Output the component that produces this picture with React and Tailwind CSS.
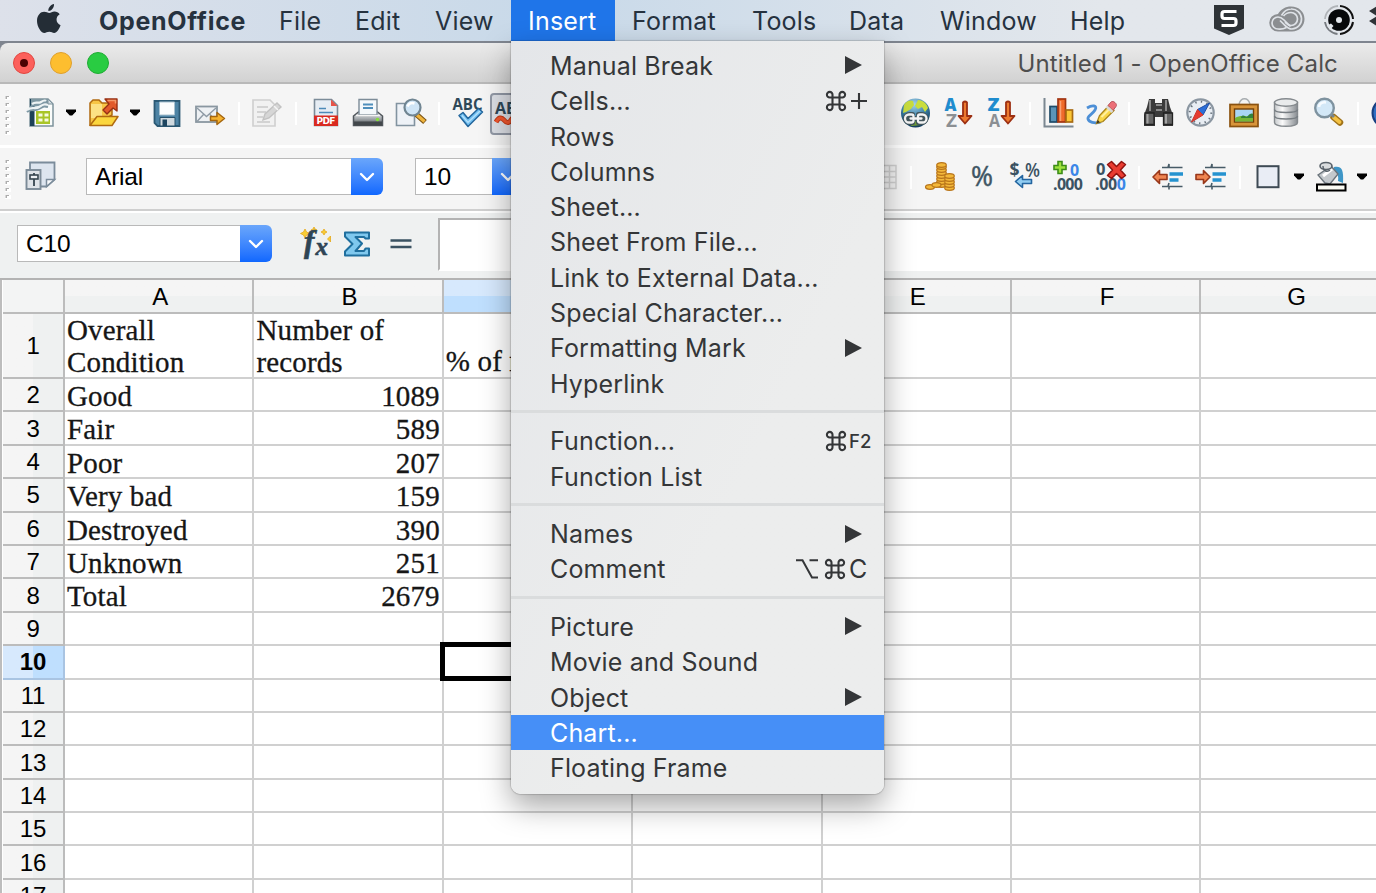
import React from "react";

const Svg = ({ children, className = "" }) => (
  <svg viewBox="0 0 32 32" className={`h-8 w-8 shrink-0 overflow-visible ${className}`}>{children}</svg>
);

const Sep = ({ className = "" }) => <div className={`mt-[5px] h-[23px] w-[2px] shrink-0 bg-white ${className}`} />;

const Caret = ({ className = "" }) => (
  <svg viewBox="0 0 12 32" className={`h-8 w-3 shrink-0 ${className}`}>
    <path d="M1 12.500h10v2L7.200 18.600H4.800L1 14.500z" fill="#000" />
  </svg>
);

const Grip = () => (
  <svg viewBox="0 0 6 44" className="-mt-[2px] ml-[5px] h-11 w-[6px] shrink-0">
    {[0, 7, 14, 21, 28, 35].map((y) => (
      <g key={y}>
        <path d={`M0 ${y + 1}h6v4h-6z`} fill="#fff" />
        <path d={`M0.500 ${y + 1}h3.500v1h-2v2h-1.500z`} fill="#adadad" />
      </g>
    ))}
  </svg>
);

const NewSheetIcon = () => (
  <Svg className="ml-[15px]">
    <path d="M4 2h18l5 5v22H4z" fill="#fafcfb" stroke="#7d929c" strokeWidth="1.500" />
    <path d="M4 2h4.500v27H4z" fill="#1d4257" />
    <path d="M5 2h17v7H5z" fill="#7f98a2" />
    <path d="M1 15c4-4 7 0 12-3s5-3 9-2M4 10c4-3 7 0 11-3s4-2 6-1" stroke="#7e98a4" strokeWidth="2" fill="none" />
    <path d="M1 13c4-4 8 0 12-3s6-3 10-2M6 7c4-3 6 0 9-2s4-2 5-1" stroke="#eef3f4" strokeWidth="2.200" fill="none" />
    <path d="M10 14h14v13H10z" fill="#a9c527" />
    <path d="M12.500 16.500h4v3h-4zM18.500 16.500h4v3h-4zM12.500 21.500h4v3h-4zM18.500 21.500h4v3h-4z" fill="#f6fae0" />
    <path d="M22 2v5h5z" fill="#d4dde2" stroke="#7d929c" />
  </Svg>
);

const OpenIcon = () => (
  <Svg className="ml-[10px]">
    <path d="M3 28V6l3-3h6l3 3h10v12L9 28z" fill="#f7c545" stroke="#b06a10" strokeWidth="1.500" />
    <path d="M4 7h11v14H4z" fill="#fce184" />
    <path d="M3 28.500l7-9h21l-6 9z" fill="#fbd63e" stroke="#b06a10" strokeWidth="1.500" strokeLinejoin="round" />
    <path d="M18 2h12v12l-4-3-6 6-4-4 6-6z" fill="#e25a2b" stroke="#962f13" strokeWidth="1.400" strokeLinejoin="round" />
    <path d="M20.500 3.500h8v3" stroke="#f59a6a" strokeWidth="1.500" fill="none" />
  </Svg>
);

const SaveIcon = () => (
  <Svg className="ml-[10px]">
    <path d="M3.500 4h25v25H6.500l-3-3z" fill="#4d83a4" stroke="#2b5974" strokeWidth="1.800" />
    <path d="M8.500 5h15v13h-15z" fill="#fbfdfe" stroke="#a8c2d1" />
    <path d="M9 20.500h15V29H9z" fill="#cfd9df" stroke="#26506b" />
    <path d="M11.500 22.500h4.500V29h-4.500z" fill="#1d455f" />
  </Svg>
);

const MailIcon = () => (
  <Svg className="ml-[11px]">
    <rect x="2" y="9.500" width="21" height="15.500" fill="#eef1f4" stroke="#8a97a1" strokeWidth="1.800" />
    <path d="M3 11l9.500 8.500L22 11M3 24.500l6.500-7M22 24.500l-6-7" stroke="#8e9aa5" strokeWidth="1.400" fill="none" />
    <path d="M16.500 19.500H23V15.500l7.500 6L23 27.500v-4h-6.500z" fill="#f5b22e" stroke="#a5660f" strokeWidth="1.500" strokeLinejoin="round" />
  </Svg>
);

const EditIcon = () => (
  <Svg className="ml-[10px]">
    <path d="M3 3h17l5 5v21H3z" fill="#f1f1f1" stroke="#cfcfcf" strokeWidth="1.600" />
    <path d="M7 10h11M7 15h9M7 20h6M7 25h13" stroke="#d3d3d3" strokeWidth="1.800" />
    <path d="M13 23l2-6L27 6l4 4-12 11z" fill="#d6d6d6" stroke="#c2c2c2" strokeWidth="1.400" />
    <path d="M24 9l4 4" stroke="#f5f5f5" strokeWidth="1.500" />
  </Svg>
);

const PdfIcon = () => (
  <Svg className="ml-[13px]">
    <path d="M4.500 2.500h17l6 6v20h-23z" fill="#e6edf4" stroke="#7c8c99" strokeWidth="1.600" />
    <path d="M21 2.500l6.500 6.500H21z" fill="#e65449" />
    <path d="M9 11.500h7M9 15.500h14" stroke="#4d8ab8" strokeWidth="1.600" />
    <path d="M4 18.500h24V29H4z" fill="#d92a20" />
    <text x="16" y="27.200" textAnchor="middle" textLength="19" fontSize="9" fontWeight="700" fill="#fff" className="font-['DejaVu_Sans',sans-serif]">PDF</text>
  </Svg>
);

const PrintIcon = () => (
  <Svg className="ml-[10px]">
    <defs>
      <linearGradient id="printer" x1="0" y1="0" x2="0" y2="1"><stop offset="0" stopColor="#eceef0" /><stop offset=".5" stopColor="#a3a8ac" /><stop offset="1" stopColor="#42474b" /></linearGradient>
    </defs>
    <path d="M1.500 19l5-4h19l5 4v9.500h-29z" fill="url(#printer)" stroke="#50565b" strokeWidth="1.500" />
    <path d="M7 18V2.500h18V18z" fill="#f4f8fb" stroke="#7d8c98" strokeWidth="1.400" />
    <path d="M11 7.500h10M11 11h10" stroke="#4e8ebb" strokeWidth="1.800" />
    <path d="M4 18.500h24" stroke="#f4f4f4" strokeWidth="1.400" />
    <path d="M2 24.500h28v4H2z" fill="#42474b" />
    <circle cx="25.500" cy="22.500" r="1.800" fill="#85dd3f" />
  </Svg>
);

const PreviewIcon = () => (
  <Svg className="ml-[10px]">
    <path d="M2.500 6.500h18v22h-18z" fill="#eef2f7" stroke="#8293a0" strokeWidth="1.600" />
    <path d="M22 17l9 8" stroke="#7c5312" strokeWidth="5.500" />
    <path d="M23 18l7.500 6.500" stroke="#efb43c" strokeWidth="3.200" />
    <circle cx="18.500" cy="10.500" r="8" fill="#cfe5f6" stroke="#708592" strokeWidth="2.200" />
    <path d="M13.500 9.500c1-3 4-4 7-3" stroke="#fff" strokeWidth="2.500" fill="none" />
  </Svg>
);

const SpellIcon = () => (
  <Svg className="ml-[12px]">
    <text x="0.500" y="12.500" textLength="30" lengthAdjust="spacingAndGlyphs" fontSize="15.500" fontWeight="700" fill="#2f4858" className="font-['Open_Sans',sans-serif]">ABC</text>
    <path d="M7 18.500l4-3 5 6 10.500-10 4 3.500L16 29.500z" fill="#73c1f2" stroke="#22659c" strokeWidth="1.500" strokeLinejoin="round" />
    <path d="M10 18.500l6 7L28 14" stroke="#b9e2fb" strokeWidth="1.200" fill="none" />
  </Svg>
);

const AutoSpellButton = () => (
  <div className="-mt-[4px] ml-[6px] flex h-[42px] w-[44px] shrink-0 items-center justify-center rounded border-2 border-[#9198a5] bg-[#dcdfe5]">
    <Svg className="-ml-[3px]">
      <text x="0" y="15.500" textLength="32" lengthAdjust="spacingAndGlyphs" fontSize="16" fontWeight="700" fill="#2f4858" className="font-['Open_Sans',sans-serif]">ABC</text>
      <path d="M1 24q4-7 8-2t7 0 8 1 6 0" stroke="#c43b18" strokeWidth="5" fill="none" />
      <path d="M1 24q4-7 8-2t7 0 8 1 6 0" stroke="#f2572f" strokeWidth="3" fill="none" />
    </Svg>
  </div>
);

const GlobeIcon = () => (
  <Svg className="ml-[366px]">
    <defs>
      <radialGradient id="globe" cx=".45" cy=".2" r=".8"><stop offset="0" stopColor="#a6d4ee" /><stop offset=".55" stopColor="#3c80a6" /><stop offset="1" stopColor="#123a5a" /></radialGradient>
    </defs>
    <circle cx="15.500" cy="16" r="14.500" fill="url(#globe)" />
    <path d="M4 8c3-5 7-5 9-4l1 4-3 4-5 3-3 1zM18 3c5 0 9 4 10 8l-3 4-3-5-4 2-3-3z" fill="#c9dd3e" />
    <path d="M5 25l7 4 9-1 4-4z" fill="#6f9b35" />
    <path d="M12.500 17.500H9.500a4 4 0 0 0 0 8h3M18.500 17.500h3.500a4 4 0 0 1 0 8h-3.500M10.500 21.500h11" fill="none" stroke="#44565c" strokeWidth="5" strokeLinecap="round" />
    <path d="M13.500 20v-.5a2 2 0 0 0-2-2H9a4 4 0 0 0 0 8h2.500a2 2 0 0 0 2-2M18 20v-.5a2 2 0 0 1 2-2h2.500a4 4 0 0 1 0 8H20a2 2 0 0 1-2-2M10.500 21.500h11" fill="none" stroke="#f4f4f4" strokeWidth="2.300" strokeLinecap="round" />
  </Svg>
);

const SortIcon = ({ top, bottom, className }) => (
  <Svg className={className}>
    <text x="8.500" y="13.500" textAnchor="middle" textLength="12" lengthAdjust="spacingAndGlyphs" fontSize="17.500" fontWeight="800" fill="#1f8cce" className="font-['Open_Sans',sans-serif]">{top}</text>
    <text x="9.500" y="30" textAnchor="middle" textLength="11" lengthAdjust="spacingAndGlyphs" fontSize="17.500" fontWeight="700" fill="#8b8f93" className="font-['Open_Sans',sans-serif]">{bottom}</text>
    <path d="M21 5.500q2-2 4 0V19h4.500L23 26.500 16.500 19H21z" fill="#ec7a2f" stroke="#9c2f12" strokeWidth="1.800" strokeLinejoin="round" />
  </Svg>
);

const ChartIcon = () => (
  <Svg className="ml-[12px]">
    <path d="M1.500 1v28.500h29" stroke="#7b8791" strokeWidth="2" fill="none" />
    <rect x="7" y="9.500" width="7" height="15.500" fill="#5b94b8" stroke="#1f4b68" strokeWidth="1.700" />
    <rect x="15" y="2" width="7.500" height="23" fill="#ef6b2b" stroke="#a23411" strokeWidth="1.700" />
    <rect x="23" y="13" width="6.500" height="12" fill="#fbc736" stroke="#a86b12" strokeWidth="1.700" />
    <path d="M17.500 4v20" stroke="#f9a173" strokeWidth="1.500" />
  </Svg>
);

const DrawIcon = () => (
  <Svg className="ml-[11px]">
    <path d="M1 11c5-3 11-3 8 2s-8 6-7 9 6 5 13 3" stroke="#4d8fd6" strokeWidth="2.800" fill="none" />
    <path d="M10.500 26.500l3-8L23 8.500l5 5-11 11z" fill="#f9d648" stroke="#a8841c" strokeWidth="1.300" />
    <path d="M15.500 20L25 10.500" stroke="#fff0a0" strokeWidth="2" />
    <path d="M22 8.500l3-3.500c2-2 7 2 5 4.500L27 13.500z" fill="#ec6f78" stroke="#b8535d" strokeWidth="1" />
    <path d="M20.500 9.500l6 5.500" stroke="#d8d8d8" strokeWidth="2.500" />
    <path d="M10.500 26.500l1.200-3.500 2.300 2.300z" fill="#3d3320" />
  </Svg>
);

const BinocularsIcon = () => (
  <Svg className="ml-[13px]">
    <path d="M6 2h6v4h7V2h6l2 8 3 8v11H20v-9h-8v9H1V18l3-8z" fill="#3b3b3b" />
    <path d="M2 16h9v11.500H2zM20.500 16h9v11.500h-9z" fill="#666" stroke="#222" strokeWidth="1.300" />
    <path d="M4.500 17v9.500M23 17v9.500" stroke="#a4a4a4" strokeWidth="2" />
    <path d="M7 3v11M23 3v11M13 8h6M13 13h6" stroke="#8b8b8b" strokeWidth="2" />
  </Svg>
);

const CompassIcon = () => (
  <Svg className="ml-[9px]">
    <circle cx="16.500" cy="15.500" r="13.200" fill="#e8edf3" stroke="#8b96a1" strokeWidth="2.200" />
    <circle cx="16.500" cy="15.500" r="10.800" fill="none" stroke="#69747e" strokeWidth="2" strokeDasharray="1.400 4.255" />
    <path d="M25.500 6L13.500 12.500l5.500 5.500z" fill="#2c6ed8" stroke="#1f4fa4" strokeWidth="1" />
    <path d="M7.500 25L13.500 12.500l5.500 5.500z" fill="#e63b30" stroke="#c8352c" strokeWidth="1" />
  </Svg>
);

const PictureIcon = () => (
  <Svg className="ml-[13px]">
    <path d="M10 7c2-7 9-7 11 0" stroke="#a8adb0" strokeWidth="1.400" fill="none" />
    <rect x="1" y="7.500" width="28" height="22" fill="#d8943a" stroke="#8a5210" strokeWidth="1.700" />
    <rect x="5.500" y="12" width="19" height="13" fill="#a9d6f4" stroke="#724008" strokeWidth="1.400" />
    <path d="M6 21c5-3 9-2 18-1v4.500H6z" fill="#76b637" />
    <path d="M12 20c2-3 4-1 5 0s4-5 7-3v4H12z" fill="#33823b" />
  </Svg>
);

const DatabaseIcon = () => (
  <Svg className="ml-[9px]">
    <defs><linearGradient id="db"><stop offset="0" stopColor="#c7cacd" /><stop offset=".35" stopColor="#fafafa" /><stop offset="1" stopColor="#888d92" /></linearGradient></defs>
    <path d="M4.500 5.500v20c0 5 23 5 23 0v-20z" fill="url(#db)" stroke="#858a8e" strokeWidth="1.400" />
    <ellipse cx="16" cy="5.500" rx="11.500" ry="3.800" fill="#e9ebec" stroke="#858a8e" strokeWidth="1.400" />
    <path d="M4.500 12.500c0 4 23 4 23 0M4.500 19c0 4 23 4 23 0" stroke="#777d82" strokeWidth="1.500" fill="none" />
  </Svg>
);

const ZoomIcon = () => (
  <Svg className="ml-[11px]">
    <path d="M20.500 20l6.500 5.500" stroke="#a07218" strokeWidth="6.500" strokeLinecap="round" />
    <path d="M21 20.500l5.500 4.500" stroke="#f4c243" strokeWidth="3.800" strokeLinecap="round" />
    <path d="M17 16l4 4" stroke="#75828c" strokeWidth="3" />
    <circle cx="11.500" cy="11" r="9.300" fill="#d3e8f7" stroke="#7e929f" strokeWidth="2.400" />
    <path d="M6 10c0-4 4-5 7-4.500" stroke="#f6fbff" strokeWidth="2.500" fill="none" />
  </Svg>
);

const HelpIcon = () => (
  <Svg className="ml-[12px]">
    <circle cx="16" cy="16" r="14.500" fill="#2f6fc4" stroke="#173f80" strokeWidth="2" />
  </Svg>
);

const StylesIcon = () => (
  <Svg className="ml-[14px]">
    <path d="M5 1.500h24.500v17l-8 7H5z" fill="#dde5ef" stroke="#7b8c9b" strokeWidth="1.800" />
    <path d="M21.500 25.500v-7h8z" fill="#f8fafc" stroke="#7b8c9b" strokeWidth="1.500" />
    <rect x="1.500" y="9" width="14" height="19" fill="#dfe3e8" stroke="#7c8b98" strokeWidth="1.900" />
    <path d="M9 12v13" stroke="#36454f" strokeWidth="1.800" />
    <rect x="5" y="14" width="8" height="4" fill="#eef1f4" stroke="#36454f" strokeWidth="1.600" />
  </Svg>
);

const TableIcon = () => (
  <Svg className="ml-[334px]">
    <path d="M2 4.500h26v23H2zM2 10.500h26M2 16h26M2 21.500h26M14 4.500v23M21.500 4.500v23" fill="#f1f1f1" stroke="#cfcfcf" strokeWidth="1.500" />
  </Svg>
);

const Coin = ({ x, y, rx = 4.800 }) => <ellipse cx={x} cy={y} rx={rx} ry="2.300" fill="#f3b83a" stroke="#b9751a" strokeWidth="1.200" />;
const CoinsIcon = () => (
  <Svg className="ml-[12px]">
    {[24, 21, 18, 15, 12, 9, 6, 4].map((y) => <Coin key={y} x="17.500" y={y} />)}
    <Coin x="6" y="26" rx="4.500" /><Coin x="12.500" y="24" rx="4.500" />
    {[27, 24, 21, 18, 15].map((y) => <Coin key={y} x="25.500" y={y} />)}
  </Svg>
);

const PercentIcon = () => (
  <Svg className="ml-[10px]">
    <text x="5" y="25" textLength="22" lengthAdjust="spacingAndGlyphs" fontSize="27" fontWeight="500" fill="#3e5564" stroke="#3e5564" strokeWidth=".5" className="font-['Open_Sans',sans-serif]">%</text>
  </Svg>
);

const StandardFormatIcon = () => (
  <Svg className="ml-[11px]">
    <text x="0.500" y="14.500" textLength="10" lengthAdjust="spacingAndGlyphs" fontSize="18" fontWeight="700" fill="#3b5262" className="font-['Open_Sans',sans-serif]">$</text>
    <text x="16" y="15.500" textLength="15" lengthAdjust="spacingAndGlyphs" fontSize="20" fontWeight="600" fill="#3b5262" className="font-['Open_Sans',sans-serif]">%</text>
    <path d="M6.500 20.500l7-6v4h9v4h-9v4z" fill="#91cdf2" stroke="#2566a0" strokeWidth="1.600" strokeLinejoin="round" />
  </Svg>
);

const AddDecimalIcon = () => (
  <Svg className="ml-[11px]">
    <path d="M6 .500h4v4h4v4h-4v4H6v-4H2v-4h4z" fill="#9de23d" stroke="#3c8c17" strokeWidth="1.600" />
    <text x="18" y="14.500" fontSize="16" fontWeight="700" fill="#3a86e8" className="font-['Open_Sans',sans-serif]">0</text>
    <text x="1" y="28.500" textLength="30" fontSize="16" fontWeight="700" fill="#3b5262" className="font-['Open_Sans',sans-serif]">.000</text>
  </Svg>
);

const DeleteDecimalIcon = () => (
  <Svg className="ml-[11px]">
    <text x="1" y="13.500" fontSize="16.500" fontWeight="700" fill="#3b5262" className="font-['Open_Sans',sans-serif]">0</text>
    <text x="0" y="28.500" textLength="31" fontSize="16" fontWeight="700" fill="#3b5262" className="font-['Open_Sans',sans-serif]">.00<tspan fill="#3a86e8">0</tspan></text>
    <path d="M12.500 3.500l4-3 5 5 5-5 4 3-5 5.500 5 5.500-4 3-5-5-5 5-4-3 5-5.500z" fill="#e93c31" stroke="#8f120f" strokeWidth="1.500" strokeLinejoin="round" />
  </Svg>
);

const IndentIcon = ({ right, className }) => (
  <Svg className={className}>
    <path d="M10 6.500h6l1-3.500v3.500h13.500M10 25.500h6l1-3.500M17 28.500v-3h13.500" stroke="#475b67" strokeWidth="1.600" fill="none" />
    <path d="M17.500 13h13.500M17.500 19h9" stroke="#2592cf" strokeWidth="3.600" />
    <path d={right ? "M15 16L8.500 9.500v4H1v5h7.500v4z" : "M1 16l6.500-6.500v4H15v5H7.500v4z"} fill="#ef8551" stroke="#98371a" strokeWidth="1.600" strokeLinejoin="round" />
  </Svg>
);

const BorderIcon = () => (
  <Svg className="ml-[11px]">
    <rect x="5.500" y="5.200" width="21" height="21" fill="#e9edf5" stroke="#3e4a54" strokeWidth="2" />
  </Svg>
);

const BucketIcon = () => (
  <Svg className="ml-[10px]">
    <path d="M19 6c7-1 10 1 9 16l-5-2c1-6-1-8-5-10z" fill="#3e96c7" />
    <path d="M3 14L16 5l7 8-8 10-5-1z" fill="#c3c8cc" stroke="#6b747b" strokeWidth="1.400" />
    <path d="M8 15l9-7" stroke="#fff" strokeWidth="3" />
    <ellipse cx="11" cy="5" rx="6" ry="3.500" fill="#d9dcde" stroke="#59626a" strokeWidth="1.600" />
    <path d="M8 5c0 6 5 6 7 4" stroke="#59626a" strokeWidth="1.400" fill="none" />
    <rect x="2" y="23.500" width="28.500" height="6" fill="#fbfbf4" stroke="#000" strokeWidth="2" />
  </Svg>
);

const ComboArrow = () => (
  <div className="flex h-[37px] w-8 items-center justify-center rounded-r-[6px] bg-linear-to-b from-[#6aa6fb] to-[#0f67fe]">
    <svg viewBox="0 0 16 10" className="h-[10px] w-4"><path d="M2 2l6 6 6-6" fill="none" stroke="#fff" strokeWidth="2.400" strokeLinecap="round" strokeLinejoin="round" /></svg>
  </div>
);

const Combo = ({ value, className }) => (
  <div className={`flex h-[37px] shrink-0 ${className}`}>
    <div className="flex flex-1 items-center border border-r-0 border-[#b9b9b9] bg-white pl-[8px] pt-[2px] text-[24.500px] tracking-[-0.200px] text-black">{value}</div>
    <ComboArrow />
  </div>
);

const MENUS = [
  ["File", "w-[76px]"],
  ["Edit", "w-[80px]"],
  ["View", "w-[93px]"],
  ["Insert", "w-[104px] bg-[#1f75e9] text-white"],
  ["Format", "w-[120px]"],
  ["Tools", "w-[97px]"],
  ["Data", "w-[91px]"],
  ["Window", "w-[130px]"],
  ["Help", "w-[90px]"],
];

const MenuBar = () => (
  <div className="flex h-[41px] shrink-0 bg-linear-to-r from-[#dde1ea] via-[#c8d9e9] via-40% to-[#e3e7ec] to-80% text-[25px] leading-[42px] tracking-[0.200px] text-[#26323f]">
    <svg viewBox="0 0 24 30" className="ml-[37px] mt-[4px] h-[30px] w-6 shrink-0">
      <path d="M17 0c.4 3.500-2.700 7.200-5.600 7C11 3.800 14 .400 17 0zM12.300 8.900c1.500 0 3-1.400 5.200-1.400 2.100 0 3.900 1 5.200 2.700-4.700 2.800-3.900 9 .9 11-1.300 3.500-3.800 7.700-6.400 7.700-1.800 0-2.600-1.100-4.900-1.100s-3.200 1.100-4.900 1.100C4 28.900 0 22.300 0 16.900 0 11 3.600 7.700 7.100 7.700c2.200 0 3.700 1.200 5.200 1.200z" fill="#242d36" />
    </svg>
    <div className="w-[201px] shrink-0 pl-[38px] font-bold tracking-[0.700px]">OpenOffice</div>
    {MENUS.map(([name, cls]) => (
      <div key={name} className={`shrink-0 pl-[17px] ${cls}`}>{name}</div>
    ))}
    <svg viewBox="0 0 30 30" className="ml-[71px] mt-[5px] h-[30px] w-[30px] shrink-0">
      <path d="M0 0h30v23.500L15 30 0 23.500z" fill="#2e3337" />
      <path d="M22.500 6.500H10.500a2.500 2.500 0 0 0-2.500 2.500v2a2.500 2.500 0 0 0 2.500 2.500h9a2.500 2.500 0 0 1 2.500 2.500v2a2.500 2.500 0 0 1-2.500 2.500H7.500" fill="none" stroke="#fff" strokeWidth="3.200" />
    </svg>
    <svg viewBox="0 0 36 26" className="ml-[25px] mt-[6px] h-[26px] w-9 shrink-0" fill="none">
      <path d="M9 25.500A8.700 8.700 0 0 1 9 8C12 3 16.500.500 22 .500 30 .500 35.500 6 35.500 13S30 25.500 23 25.500z" fill="#8b8e91" />
      <path d="M17.500 21.500c-3 1.500-6 1.800-8.500 1.500a6 6 0 0 1 0-12c3 0 4.500 1.500 6 3l6.500 6.500" stroke="#dfe3e8" strokeWidth="1.700" />
      <path d="M12.500 9.500C15 5 18 3 22 3a10 10 0 0 1 1 20c-4 0-6-2.500-8-4.500l-4-4" stroke="#dfe3e8" strokeWidth="1.700" />
      <path d="M14.500 10c2-2.500 4.500-3.500 7.500-3.500a6.500 6.500 0 0 1 0 13c-3 0-4.500-2-6-3.500" stroke="#dfe3e8" strokeWidth="1.700" />
    </svg>
    <svg viewBox="0 0 32 32" className="ml-[18px] mt-[4px] h-8 w-8 shrink-0" fill="none">
      <circle cx="16" cy="16" r="10.800" fill="#07090b" />
      <path d="M17 2a14 14 0 0 1 13 13M30 18a14 14 0 0 1-13 12" stroke="#111" strokeWidth="2" />
      <path d="M14.500 30A14 14 0 0 1 2 18" stroke="#777b80" strokeWidth="1.800" />
      <path d="M2 15A14 14 0 0 1 15 2" stroke="#b0b4b8" strokeWidth="1.800" />
      <circle cx="16" cy="16" r="3" fill="#e2e6eb" />
      <path d="M4 21.500l4-2 2.500 2.500-3.500 4z" fill="#e2e6eb" />
    </svg>
    <svg viewBox="0 0 16 28" className="ml-[14px] mt-[6px] h-7 w-4 shrink-0">
      <path d="M8 0l8 5-8 5-8-5zM8 10l8 5-8 5-8-5z" fill="#2e3337" />
    </svg>
  </div>
);

const ITEMS = [
  ["Manual Break", "sub"],
  ["Cells...", "plus"],
  ["Rows"],
  ["Columns"],
  ["Sheet..."],
  ["Sheet From File..."],
  ["Link to External Data..."],
  ["Special Character..."],
  ["Formatting Mark", "sub"],
  ["Hyperlink"],
  null,
  ["Function...", "f2"],
  ["Function List"],
  null,
  ["Names", "sub"],
  ["Comment", "optc"],
  null,
  ["Picture", "sub"],
  ["Movie and Sound"],
  ["Object", "sub"],
  ["Chart..."],
  ["Floating Frame"],
];

const CommandGlyph = () => (
  <svg viewBox="0 0 22 22" className="h-[22px] w-[22px]" fill="none" stroke="#343638" strokeWidth="2.100">
    <path d="M7.500 7.500h7v7h-7zM7.500 7.500H4.800a2.800 2.800 0 1 1 2.700-2.700zM14.500 7.500V4.800A2.800 2.800 0 1 1 17.200 7.500zM14.500 14.500h2.700a2.800 2.800 0 1 1-2.700 2.700zM7.500 14.500v2.700a2.800 2.800 0 1 1-2.700-2.700z" />
  </svg>
);

const Accel = ({ kind }) => {
  if (kind === "sub")
    return <svg viewBox="0 0 17 18" className="mr-[22px] h-[18px] w-[17px]"><path d="M0 0l17 9-17 9z" fill="#343638" /></svg>;
  if (kind === "plus")
    return (
      <div className="mr-[17px] flex items-center gap-[4px]">
        <CommandGlyph />
        <svg viewBox="0 0 16 16" className="h-4 w-4"><path d="M8 0v16M0 8h16" stroke="#343638" strokeWidth="2.100" /></svg>
      </div>
    );
  if (kind === "f2")
    return <div className="mr-[11px] flex items-center gap-[2px]"><CommandGlyph /><span className="w-[24px] pt-[2px] text-[18.500px] font-medium leading-[33px]">F2</span></div>;
  if (kind === "optc")
    return (
      <div className="mr-[16px] flex items-center">
        <svg viewBox="0 0 22 20" className="h-5 w-[22px]"><path d="M0 1.200h6.500L16 18.500h6M13.500 1.200H22" fill="none" stroke="#343638" strokeWidth="2" /></svg>
        <div className="ml-[6px]"><CommandGlyph /></div>
        <span className="ml-[3px] w-[19px] pt-px leading-[34px]">C</span>
      </div>
    );
  return null;
};

const InsertMenu = () => (
  <div className="absolute left-[511px] top-[41px] z-20 w-[373px] overflow-hidden rounded-b-[10px] bg-linear-to-br from-[#e4e6e9] to-[#eceded] to-60% pb-[9px] pt-[6.800px] text-[25px] text-[#343638] shadow-[0_12px_30px_rgba(0,0,0,0.35),0_0_1px_1px_rgba(0,0,0,0.15)]">
    {ITEMS.map((it, i) =>
      it ? (
        <div key={i} className={`flex h-[35.300px] items-center justify-between whitespace-nowrap pl-[39px] tracking-[0.150px] ${it[0] === "Chart..." ? "bg-[#468ff7] text-white" : ""}`}>
          <span className="pt-px leading-[34px]">{it[0]}</span>
          <Accel kind={it[1]} />
        </div>
      ) : (
        <div key={i} className="flex h-[22.300px] items-center"><div className="h-[3px] w-full bg-[#dadcdd]" /></div>
      )
    )}
  </div>
);

const COLS = ["A", "B", "C", "D", "E", "F", "G"];
const DATA = [
  ["Good", "1089"], ["Fair", "589"], ["Poor", "207"], ["Very bad", "159"], ["Destroyed", "390"], ["Unknown", "251"], ["Total", "2679"],
];

const RowHead = ({ n }) => (
  <div className={`flex w-[62px] shrink-0 items-center justify-center border-b-2 border-r-2 pt-px text-[24px] tracking-[-0.200px] text-black ${n === 10 ? "border-[#a9c4e2] bg-linear-to-r from-[#d7e9fd] from-50% to-[#bfdffe] to-50% font-bold" : "border-[#bcbcbc] bg-linear-to-r from-[#f5f5f5] from-50% to-[#eff1f1] to-50%"}`}>
    {n}
  </div>
);

const CELL = "relative w-[189.400px] shrink-0 border-b-2 border-r-2 border-[#d0d0d0] bg-white px-[2px]";
const SERIF = "font-['Liberation_Serif',serif] text-[29px] tracking-[0.150px] text-[#161616] [-webkit-text-stroke:0.300px_#161616]";

const Sheet = () => (
  <div className="flex flex-1 flex-col overflow-hidden border-l-2 border-[#bdbdbd] pl-px">
    <div className="flex h-[34px] shrink-0">
      <div className="w-[62px] shrink-0 border-b-2 border-r-2 border-[#bcbcbc] bg-[#f3f4f4]" />
      {COLS.map((c) => (
        <div key={c} className={`flex w-[189.400px] shrink-0 items-center justify-center border-b-2 border-r-2 border-[#bcbcbc] pl-[3px] pt-px text-[24px] text-black ${c === "C" ? "bg-linear-to-b from-[#d7e9fd] from-50% to-[#bfdffe] to-50%" : "bg-linear-to-b from-[#f5f5f5] from-50% to-[#eff1f1] to-50%"}`}>{c}</div>
      ))}
    </div>
    <div className="flex h-[65px] shrink-0">
      <RowHead n={1} />
      <div className={`${CELL} ${SERIF} pt-px leading-[31.500px]`}>Overall<br />Condition</div>
      <div className={`${CELL} ${SERIF} pt-px leading-[31.500px]`}>Number of<br />records</div>
      <div className={`${CELL} ${SERIF} flex items-end whitespace-nowrap leading-[31px]`}>% of records</div>
      {COLS.slice(3).map((c) => <div key={c} className={CELL} />)}
    </div>
    {Array.from({ length: 16 }, (_, i) => i + 2).map((n) => (
      <div key={n} className="flex h-[33.400px] shrink-0">
        <RowHead n={n} />
        {COLS.map((c, j) => (
          <div key={c} className={`${CELL} ${SERIF} leading-[34px] ${j === 1 ? "text-right" : ""}`}>
            {j < 2 && DATA[n - 2] ? DATA[n - 2][j] : ""}
            {n === 10 && c === "C" && <div className="absolute -left-[4px] -top-[4px] z-10 h-[39px] w-[197px] border-[5px] border-black" />}
          </div>
        ))}
      </div>
    ))}
  </div>
);

export default function App() {
  return (
    <div className="relative flex h-[893px] w-[1376px] flex-col overflow-hidden bg-[#7f858f] font-['Inter',sans-serif]">
      <MenuBar />
      <div className="mt-[2px] flex h-[41px] shrink-0 items-center justify-between rounded-tl-[8px] border-b-2 border-[#b9b9b9] bg-linear-to-b from-[#ebebeb] to-[#d2d2d2] pl-[13px] pr-[38px]">
        <div className="flex gap-[15px]">
          <div className="flex h-[22px] w-[22px] items-center justify-center rounded-full border border-[#e2463f] bg-[#fc605b]"><div className="h-2 w-2 rounded-full bg-[#4c0202]" /></div>
          <div className="h-[22px] w-[22px] rounded-full border border-[#e0a02c] bg-[#fdbe2f]" />
          <div className="h-[22px] w-[22px] rounded-full border border-[#1fac33] bg-[#29cc42]" />
        </div>
        <div className="pt-[2px] text-[24px] tracking-[0.150px] text-[#4e4e4e]">Untitled 1 - OpenOffice Calc</div>
      </div>
      <div className="flex h-[61px] shrink-0 items-start overflow-hidden bg-[#f5f5f5] pt-[13px]">
        <Grip />
        <NewSheetIcon /><Caret className="ml-[7px]" />
        <OpenIcon /><Caret className="ml-[10px]" />
        <SaveIcon /><MailIcon /><Sep className="ml-[12px]" />
        <EditIcon /><Sep className="ml-[13px]" />
        <PdfIcon /><PrintIcon /><PreviewIcon /><Sep className="ml-[12px]" />
        <SpellIcon /><AutoSpellButton />
        <GlobeIcon />
        <SortIcon top="A" bottom="Z" className="ml-[10px]" />
        <SortIcon top="Z" bottom="A" className="ml-[11px]" />
        <Sep className="ml-[12px]" />
        <ChartIcon /><DrawIcon /><Sep className="ml-[10px]" />
        <BinocularsIcon /><CompassIcon /><PictureIcon /><DatabaseIcon /><ZoomIcon />
        <Sep className="ml-[12px]" /><HelpIcon />
      </div>
      <div className="h-[3px] shrink-0 bg-white" />
      <div className="flex h-[61px] shrink-0 items-start overflow-hidden bg-[#f5f5f5] pt-[13px] font-['Liberation_Sans',sans-serif]">
        <Grip />
        <StylesIcon />
        <Combo value="Arial" className="-mt-[3px] ml-[29px] w-[297px]" />
        <Combo value="10" className="-mt-[3px] ml-[32px] w-[109px]" />
        <div className="w-[10px] shrink-0" />
        <TableIcon /><Sep className="ml-[10px]" />
        <CoinsIcon /><PercentIcon /><StandardFormatIcon /><AddDecimalIcon /><DeleteDecimalIcon />
        <Sep className="ml-[11px]" />
        <IndentIcon className="ml-[12px]" /><IndentIcon right className="ml-[11px]" />
        <Sep className="ml-[12px]" />
        <BorderIcon /><Caret className="ml-[9px]" />
        <BucketIcon /><Caret className="ml-[9px]" />
      </div>
      <div className="flex h-[71px] shrink-0 items-start overflow-hidden border-b-2 border-t-2 border-b-[#b3b3b3] border-t-[#cfcfcf] bg-[#eff1f1] font-['Liberation_Sans',sans-serif] shadow-[inset_0_2px_0_#fff]">
        <Combo value="C10" className="ml-[17px] mt-[14px] w-[255px]" />
        <svg viewBox="0 0 32 32" className="ml-[28px] mt-[16px] h-8 w-8 shrink-0 overflow-visible">
          <path d="M5 2l1.500 3 3 1.500-3 1.500L5 11 3.500 8l-3-1.500 3-1.500zM14 0l1 2 2 1-2 1-1 2-1-2-2-1 2-1zM24 2l1 2 2 1-2 1-1 2-1-2-2-1 2-1zM30.500 9v6l-3-3z" fill="#f9cd35" stroke="#e5a81c" strokeWidth=".8" />
          <text x="4" y="25" fontSize="31" fontStyle="italic" fontWeight="700" fill="#2e4454" stroke="#2e4454" strokeWidth=".6" className="font-['Liberation_Serif',serif]">f</text>
          <text x="15.500" y="27.500" fontSize="25" fontStyle="italic" fontWeight="700" fill="#2e4454" stroke="#2e4454" strokeWidth=".6" className="font-['Liberation_Serif',serif]">x</text>
        </svg>
        <svg viewBox="0 0 28 28" className="ml-[11px] mt-[19px] h-7 w-7 shrink-0">
          <path d="M2 2.500h24v6h-3.500L21 7h-8.500l6.500 6.500L12.500 21H21l1.500-2.500H26v7H2v-4L9.500 14 2 6.500z" fill="#7fc8ee" stroke="#1f6f9e" strokeWidth="2" strokeLinejoin="round" />
        </svg>
        <svg viewBox="0 0 22 12" className="ml-[19px] mt-[27px] h-3 w-[22px] shrink-0"><path d="M.5 2.500h21M.5 9h21" stroke="#3a5262" strokeWidth="2.600" /></svg>
        <div className="ml-[26px] mt-[7px] h-[53px] flex-1 border-2 border-r-0 border-b-[#fff] border-l-[#b3b3b3] border-t-[#b3b3b3] bg-white" />
      </div>
      <div className="flex h-[613px] shrink-0 flex-col overflow-hidden bg-white font-['Liberation_Sans',sans-serif]"><Sheet /></div>
      <InsertMenu />
    </div>
  );
}
